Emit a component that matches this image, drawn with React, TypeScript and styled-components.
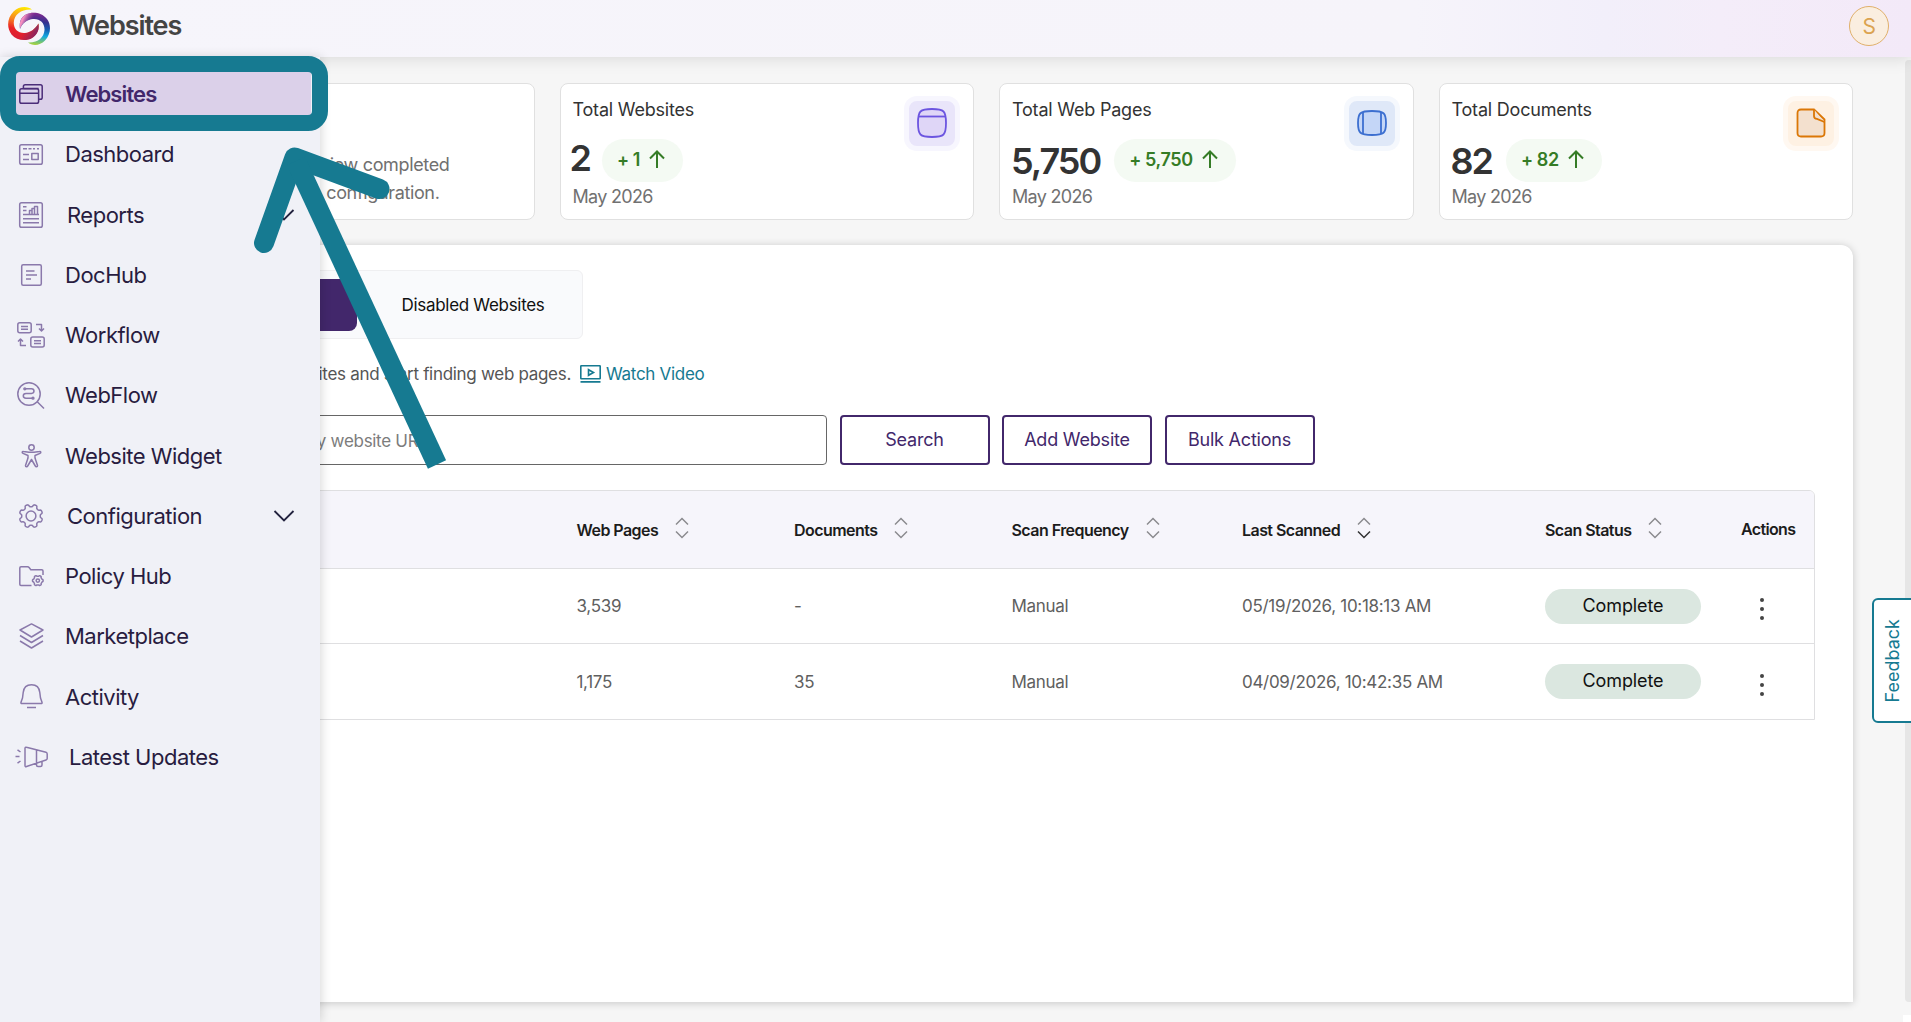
import type { ReactNode } from 'react';
import styled, { createGlobalStyle } from 'styled-components';

const PURPLE = '#42276b';
const TEAL = '#167a91';

const Logo = () => (
  <svg width="44" height="40" viewBox="7 6 44 40">
    <defs>
      <linearGradient id="warm" gradientUnits="userSpaceOnUse" x1="29" y1="6" x2="21" y2="40">
        <stop offset="0.05" stopColor="#ffec00" />
        <stop offset="0.2" stopColor="#fdc70c" />
        <stop offset="0.45" stopColor="#f7851f" />
        <stop offset="0.72" stopColor="#ea2227" />
        <stop offset="0.98" stopColor="#d81f36" />
      </linearGradient>
      <linearGradient id="wine" gradientUnits="userSpaceOnUse" x1="24" y1="30" x2="38" y2="36">
        <stop offset="0" stopColor="#8c2560" stopOpacity="0" />
        <stop offset="0.8" stopColor="#8c2560" />
      </linearGradient>
      <linearGradient id="cool" gradientUnits="userSpaceOnUse" x1="37" y1="12" x2="33" y2="45">
        <stop offset="0.05" stopColor="#7b2a90" />
        <stop offset="0.28" stopColor="#35308f" />
        <stop offset="0.5" stopColor="#1560b4" />
        <stop offset="0.7" stopColor="#12a9df" />
        <stop offset="0.98" stopColor="#a5d140" />
      </linearGradient>
      <linearGradient id="pink" gradientUnits="userSpaceOnUse" x1="20" y1="26" x2="29" y2="30">
        <stop offset="0" stopColor="#f78fc0" />
        <stop offset="1" stopColor="#8a2c92" stopOpacity="0" />
      </linearGradient>
    </defs>
    {['url(#warm)', 'url(#wine)'].map((fill) => (
      <path
        key={fill}
        fill={fill}
        d="M32 9.500C28 6 19 6 13.500 11.500C7 18 6.500 28 11.500 34.500C16.500 40.500 26 41.500 32 38C37 35 39.500 30 38.500 23.500C35 29 30.500 32.500 25 33C18 33.500 13.500 29 13.800 22.500C14.200 14.500 21 9 32 9.500Z"
      />
    ))}
    {['url(#cool)', 'url(#pink)'].map((fill) => (
      <path
        key={fill}
        fill={fill}
        d="M28 42.500C32 46 40 46 45 40.500C51 34 51.500 25 47 19C41.500 12 32 11.500 26 14.500C21 17 19 22 20 29C22.500 23 27 19.500 33 19C40 18.500 44.800 23 44.500 30C44 37.500 38 43 28 42.500Z"
      />
    ))}
  </svg>
);

const ChevronDown = () => (
  <svg width="22" height="14" viewBox="0 0 22 14" fill="none" stroke="#23233f" strokeWidth="1.8">
    <path d="M1.500 2L11 11.500L20.500 2" />
  </svg>
);

const ArrowUp = () => (
  <svg width="16" height="18" viewBox="0 0 16 18" fill="none" stroke="#357c26" strokeWidth="2">
    <path d="M8 18V1.500M1 8.500L8 1.500L15 8.500" />
  </svg>
);

const SortIcon = ({ desc }: { desc?: boolean }) => (
  <svg width="14" height="22" viewBox="0 0 14 22" fill="none" stroke="#8b8b8f" strokeWidth="1.5">
    <path d="M1 7.500L7 1.500L13 7.500" />
    <path d="M1 14.500L7 20.500L13 14.500" stroke={desc ? '#333' : undefined} />
  </svg>
);

const KebabIcon = () => (
  <svg width="6" height="24" viewBox="0 0 6 24" fill="#444">
    <circle cx="3" cy="3" r="2" />
    <circle cx="3" cy="12" r="2" />
    <circle cx="3" cy="21" r="2" />
  </svg>
);

const VideoIcon = () => (
  <svg width="21" height="18" viewBox="0 0 21 18" fill="none" stroke={TEAL} strokeWidth="1.6">
    <rect x="0.800" y="0.800" width="19.400" height="13" rx="0.500" />
    <path d="M0.500 16.900H20.500M8.500 4.700V10.300L13.500 7.500Z" />
  </svg>
);

// eight rounded lobes, with a dip at the top
const gearOutline = (cx: number, cy: number, radius: number, depth: number, lobes: number) => {
  const points = Array.from({ length: 144 }, (_, i) => {
    const angle = (i / 144) * Math.PI * 2;
    const wave = Math.tanh(-2.2 * Math.cos(lobes * angle));
    const r = radius + depth * wave;
    return `${(cx + r * Math.sin(angle)).toFixed(2)} ${(cy - r * Math.cos(angle)).toFixed(2)}`;
  });
  return `M${points.join('L')}Z`;
};

interface NavEntry {
  label: string;
  icon: ReactNode;
  w: number;
  h: number;
  active?: boolean;
  expandable?: boolean;
  inset?: number;
}

const navItems: NavEntry[] = [
  {
    label: 'Websites',
    active: true,
    w: 24,
    h: 20,
    icon: (
      <>
        <rect x="0.800" y="4.800" width="18.800" height="14.400" rx="1.800" />
        <path d="M0.800 9.200H19.600M4.400 4.500V2.600Q4.400 0.800 6.200 0.800H21.400Q23.200 0.800 23.200 2.600V13.400Q23.200 15.200 21.400 15.200H19.800M4.600 4.600H19.600" />
      </>
    ),
  },
  {
    label: 'Dashboard',
    w: 24,
    h: 21,
    icon: (
      <>
        <rect x="0.700" y="0.700" width="22.600" height="19.600" rx="1.800" />
        <path d="M4 4.800H8M9.500 4.800H12.500M14 4.800H16M18 4.800H20M4 10.600H10M4 15.600H10" />
        <rect x="12.800" y="9.600" width="6.400" height="5.800" />
      </>
    ),
  },
  {
    label: 'Reports',
    expandable: true,
    inset: 2,
    w: 24,
    h: 26,
    icon: (
      <>
        <rect x="0.700" y="0.700" width="22.600" height="24.600" rx="1.800" />
        <path d="M4 4.800H7.500M4 8.500H7.500M4 12.500H20M4 16.700H20M4 20.700H20M10.500 12V8.500H13V12M13 8.500V6.500H15.500V12M15.500 6.500V4.600H18.500V12" />
      </>
    ),
  },
  {
    label: 'DocHub',
    w: 21,
    h: 22,
    icon: (
      <>
        <rect x="0.700" y="0.700" width="19.600" height="20.600" rx="1.500" />
        <path d="M5 7H13.500M5 11H16M5 15H10" />
      </>
    ),
  },
  {
    label: 'Workflow',
    w: 28,
    h: 26,
    icon: (
      <>
        <rect x="0.800" y="0.800" width="13.400" height="10" rx="2" />
        <rect x="13.800" y="15" width="13.400" height="10" rx="2" />
        <path d="M4 4.500H11M4 7.300H11M17 18.700H24M17 21.500H24M19 2.600H24.500V8.500M22 6.500L24.500 9L27 6.500M9 23.500H3.500V17.500M1 19.500L3.500 17L6 19.500" />
      </>
    ),
  },
  {
    label: 'WebFlow',
    w: 28,
    h: 27,
    icon: (
      <>
        <circle cx="12" cy="12" r="11.200" />
        <path d="M20 19.500L27 26.500M9 6.800H14.500C17.800 6.800 17.800 11.400 14.500 11.400H9C5.400 11.400 5.400 16.200 9 16.200H15" />
        <circle cx="7.800" cy="6.800" r="0.900" />
        <circle cx="16" cy="16.200" r="0.900" />
      </>
    ),
  },
  {
    label: 'Website Widget',
    w: 21,
    h: 24,
    icon: (
      <>
        <circle cx="10.500" cy="3.500" r="2.700" />
        <path d="M1.200 8.200Q1.400 7.400 2.500 7.600L8 8.200H13L18.500 7.600Q19.600 7.400 19.800 8.200Q19.900 9 19 9.400L14 11.500Q13.700 13.500 14.500 15.500L16.500 21.500Q16.600 22.700 15.500 22.800Q14.700 22.900 14.300 22L10.500 15.500L6.700 22Q6.300 22.900 5.500 22.800Q4.400 22.700 4.500 21.500L6.500 15.500Q7.300 13.500 7 11.500L2 9.400Q1.100 9 1.200 8.200Z" />
      </>
    ),
  },
  {
    label: 'Configuration',
    expandable: true,
    inset: 2,
    w: 24,
    h: 24,
    icon: (
      <>
        <circle cx="12" cy="12" r="4.900" />
        <path d={gearOutline(12, 12, 10.5, 1.25, 8)} />
      </>
    ),
  },
  {
    label: 'Policy Hub',
    w: 25,
    h: 21,
    icon: (
      <>
        <path d="M12.500 19.500H2Q0.800 19.500 0.800 18.300V2Q0.800 0.800 2 0.800H8.500Q9.500 0.800 10.300 1.800L11.800 3.700H22.800Q24 3.700 24 4.900V9" />
        <circle cx="18.800" cy="14.600" r="1.700" />
        <path d={gearOutline(18.8, 14.6, 4.8, 0.5, 6)} />
      </>
    ),
  },
  {
    label: 'Marketplace',
    w: 25,
    h: 26,
    icon: <path d="M12.500 0.900L24 7L12.500 14L1 7ZM1 12.500L12.500 19.500L24 12.500M1 18L12.500 25L24 18" />,
  },
  {
    label: 'Activity',
    w: 23,
    h: 25,
    icon: (
      <path d="M2 19.600Q0.600 19.600 1 18.200L2.500 14L3.200 8.500Q4 0.800 11.500 0.800T19.800 8.500L20.500 14L22 18.200Q22.400 19.600 21 19.600ZM7 23.500H16" />
    ),
  },
  {
    label: 'Latest Updates',
    inset: 4,
    w: 33,
    h: 22,
    icon: (
      <path d="M10 2.300Q10 0.800 11.500 1.300L31 6.300Q32.200 6.700 32.200 8V12.500Q32.200 13.600 31 14L11.500 20.500Q10 21 10 19.600ZM21.500 4V19Q21.500 20.500 23 20.500H25.500Q27 20.500 27 19V15.300M0.500 10.500H4.500M2.500 3.800L5.500 6M2.500 17.200L5.500 15" />
    ),
  },
];

interface Stat {
  title: string;
  value: string;
  delta: string;
  tone: string;
  ring: string;
  raised?: boolean;
  icon: ReactNode;
}

const stats: Stat[] = [
  {
    title: 'Total Websites',
    value: '2',
    delta: '+ 1',
    tone: '#e9e5fa',
    ring: '#f7f6fe',
    raised: true,
    icon: (
      <g stroke="#6c55e0" fill="#dfd6f7">
        <path d="M1 15C1 3 3 1 15 1S29 3 29 15S27 29 15 29S1 27 1 15Z" />
        <path d="M2 8.500H28" />
      </g>
    ),
  },
  {
    title: 'Total Web Pages',
    value: '5,750',
    delta: '+ 5,750',
    tone: '#dfe8f8',
    ring: '#f5f8fd',
    icon: (
      <g stroke="#3c6fd0" fill="#c4d6f7">
        <path d="M1 15C1 5 3 3 15 3S29 5 29 15S27 27 15 27S1 25 1 15Z" />
        <path d="M6 4V26M24 4V26" />
      </g>
    ),
  },
  {
    title: 'Total Documents',
    value: '82',
    delta: '+ 82',
    tone: '#fef1e3',
    ring: '#fff8f1',
    icon: (
      <g stroke="#db7706" fill="#f3e0ce">
        <path d="M1.500 5Q1.500 1.500 5 1.500H18L28.500 11.500V25Q28.500 28.500 25 28.500H5Q1.500 28.500 1.500 25Z" />
        <path d="M18 1.500V8Q18 10.800 21 10.800L28.500 14" />
      </g>
    ),
  },
];

const rows = [
  { pages: '3,539', docs: '-', freq: 'Manual', scanned: '05/19/2026, 10:18:13 AM' },
  { pages: '1,175', docs: '35', freq: 'Manual', scanned: '04/09/2026, 10:42:35 AM' },
];

const App = () => {
  return (
    <Page>
      <GlobalStyle />
      <Header>
        <Logo />
        <PageTitle>Websites</PageTitle>
        <Avatar>S</Avatar>
      </Header>
      <Body>
        <Sidebar>
          {navItems.map(({ label, icon, w, h, active, expandable, inset = 0 }) => (
            <NavItem key={label} $active={active}>
              <NavIcon>
                <NavSvg $active={active} width={w} height={h} viewBox={`0 0 ${w} ${h}`}>
                  {icon}
                </NavSvg>
              </NavIcon>
              <NavLabel $active={active} $inset={inset}>
                {label}
              </NavLabel>
              {expandable && <ChevronDown />}
            </NavItem>
          ))}
        </Sidebar>
        <Main>
          <StatGrid>
            <InfoCard>
              <InfoLine>Review completed</InfoLine>
              <InfoLine $shift={10}>configuration.</InfoLine>
            </InfoCard>
            {stats.map((stat) => (
              <StatCard key={stat.title}>
                <div>
                  <StatTitle>{stat.title}</StatTitle>
                  <StatRow>
                    <StatValue $raised={stat.raised}>{stat.value}</StatValue>
                    <Delta>
                      {stat.delta}
                      <ArrowUp />
                    </Delta>
                  </StatRow>
                  <StatDate>May 2026</StatDate>
                </div>
                <StatIcon $tone={stat.tone} $ring={stat.ring}>
                  <svg width="30" height="30" viewBox="0 0 30 30" strokeWidth="1.800">
                    {stat.icon}
                  </svg>
                </StatIcon>
              </StatCard>
            ))}
          </StatGrid>
          <Panel>
            <Tabs>
              <ActiveTab />
              <Tab>Disabled Websites</Tab>
            </Tabs>
            <Description>
              <DescText>Add websites and start finding web pages.</DescText>
              <VideoIcon />
              <VideoLink>Watch Video</VideoLink>
            </Description>
            <Toolbar>
              <SearchInput placeholder="Search by website URL" />
              <Button>Search</Button>
              <Button>Add Website</Button>
              <Button>Bulk Actions</Button>
            </Toolbar>
            <Table>
              <HeadRow>
                <span />
                {['Web Pages', 'Documents', 'Scan Frequency', 'Last Scanned', 'Scan Status'].map((name) => (
                  <HeadCell key={name}>
                    {name}
                    <SortIcon desc={name === 'Last Scanned'} />
                  </HeadCell>
                ))}
                <ActionsHead>Actions</ActionsHead>
              </HeadRow>
              {rows.map((row) => (
                <Row key={row.scanned}>
                  <span />
                  <span>{row.pages}</span>
                  <span>{row.docs}</span>
                  <span>{row.freq}</span>
                  <span>{row.scanned}</span>
                  <Status>Complete</Status>
                  <Kebab>
                    <KebabIcon />
                  </Kebab>
                </Row>
              ))}
            </Table>
          </Panel>
        </Main>
        <ScrollThumb />
        <ScrollCorner />
      </Body>
      <Feedback>Feedback</Feedback>
      <Highlight />
      <Pointer viewBox="0 0 460 480">
        <path d="M264 243L294.500 157.500L379.500 189" strokeLinecap="round" strokeLinejoin="round" />
        <path d="M296 161L437 464.500" />
      </Pointer>
    </Page>
  );
};

export default App;

const GlobalStyle = createGlobalStyle`
  * {
    box-sizing: border-box;
  }
  body {
    margin: 0;
    overflow: hidden;
    font-family: Inter, 'Liberation Sans', sans-serif;
    font-size: 17px;
    letter-spacing: -0.3px;
    color: #333;
  }
`;

const Page = styled.div`
  position: relative;
  display: flex;
  flex-direction: column;
  height: 1022px;
  overflow: hidden;
`;

const Header = styled.header`
  display: flex;
  align-items: center;
  flex: none;
  height: 57px;
  padding: 0 22px 5px 7px;
  background: linear-gradient(90deg, #f6f5fb 0%, #f6f4fa 74%, #f2effa 84%, #f4edf9 90%, #f3e9f8 100%);
  box-shadow: 0 1px 16px rgba(0, 0, 0, 0.13);
  z-index: 1;
`;

const PageTitle = styled.h1`
  margin: -1px auto 0 18px;
  font-size: 27px;
  font-weight: 600;
  letter-spacing: -1.1px;
  color: #444;
`;

const Avatar = styled.div`
  display: flex;
  align-items: center;
  justify-content: center;
  width: 40px;
  height: 40px;
  border: 1px solid #e0b06a;
  border-radius: 50%;
  background: #faeee0;
  color: #dba351;
  font-size: 21px;
`;

const Body = styled.div`
  position: relative;
  flex: 1;
  background: #f6f6f6;
`;

const Sidebar = styled.nav`
  position: absolute;
  top: 0;
  left: 0;
  z-index: 2;
  width: 320px;
  height: 100%;
  padding-top: 7px;
  background: #f0f1f7;
  box-shadow: 1px 0 10px rgba(0, 0, 0, 0.16);
`;

const NavItem = styled.div<{ $active?: boolean }>`
  display: flex;
  align-items: center;
  height: 60.250px;
  padding-right: 25px;
  ${({ $active }) => $active && 'background: linear-gradient(#dbd0e9, #dbd0e9) 12px 5px / 299px 50px no-repeat;'}
`;

const NavIcon = styled.span`
  display: flex;
  justify-content: center;
  width: 62px;
  flex: none;
`;

const NavSvg = styled.svg<{ $active?: boolean }>`
  flex: none;
  overflow: visible;
  fill: none;
  stroke: ${({ $active }) => ($active ? '#4b2d79' : '#8a79ab')};
  stroke-width: 1.5;
  stroke-linejoin: round;
`;

const NavLabel = styled.span<{ $active?: boolean; $inset: number }>`
  flex: 1;
  padding-left: ${({ $inset }) => $inset + 3}px;
  font-size: 22px;
  font-weight: ${({ $active }) => ($active ? 600 : 400)};
  letter-spacing: ${({ $active }) => ($active ? '-0.900px' : '-0.500px')};
  color: ${({ $active }) => ($active ? PURPLE : '#281c40')};
`;

const Main = styled.main`
  padding: 26px 58px 0 120px;
`;

const StatGrid = styled.section`
  display: grid;
  grid-template-columns: repeat(4, 1fr);
  gap: 25px;
`;

const Card = styled.div`
  height: 137px;
  border: 1px solid #e0e0e0;
  border-radius: 8px;
  background: #fff;
`;

const InfoCard = styled(Card)`
  display: flex;
  flex-direction: column;
  align-items: flex-end;
  padding: 67px 84px 0 0;
`;

const InfoLine = styled.span<{ $shift?: number }>`
  margin-right: ${({ $shift = 0 }) => $shift}px;
  font-size: 18px;
  line-height: 28px;
  letter-spacing: -0.350px;
  color: #707070;
`;

const StatCard = styled(Card)`
  display: flex;
  justify-content: space-between;
  padding: 12px 13px 0 12px;
`;

const StatTitle = styled.div`
  margin-top: 2px;
  font-size: 18px;
  line-height: 23px;
  letter-spacing: -0.200px;
`;

const StatRow = styled.div`
  display: flex;
  align-items: center;
  gap: 16px;
  height: 43px;
  margin-top: 18px;
`;

const StatValue = styled.span<{ $raised?: boolean }>`
  margin: ${({ $raised }) => ($raised ? '-6px -4px 0 -3px' : '0 -2px 0 -1px')};
  font-size: 36px;
  font-weight: 600;
  letter-spacing: -2px;
`;

const Delta = styled.span`
  display: flex;
  align-items: center;
  gap: 9px;
  height: 43px;
  padding: 0 18px 3px 15px;
  border-radius: 22px;
  background: #f4faf3;
  color: #357c26;
  font-size: 18px;
  font-weight: 600;
  letter-spacing: -0.400px;
`;

const StatDate = styled.div`
  margin-top: 4px;
  font-size: 18px;
  line-height: 22px;
  letter-spacing: -0.700px;
  color: #717171;
`;

const StatIcon = styled.div<{ $tone: string; $ring: string }>`
  display: flex;
  align-items: center;
  justify-content: center;
  width: 56px;
  height: 55px;
  border: 5px solid ${({ $ring }) => $ring};
  border-radius: 13px;
  background: ${({ $tone }) => $tone};

  svg {
    margin-top: -1px;
  }
`;

const Panel = styled.section`
  height: 757px;
  margin-top: 25px;
  padding: 25px 38px 0;
  border-radius: 12px 12px 0 0;
  background: #fff;
  box-shadow: 0 1px 8px rgba(0, 0, 0, 0.2);
`;

const Tabs = styled.div`
  display: flex;
  align-items: center;
  width: 425px;
  height: 69px;
  padding: 0 7px;
  border: 1px solid #efeff1;
  border-radius: 6px;
  background: #f9fafc;
`;

const ActiveTab = styled.div`
  width: 191px;
  height: 52px;
  border-radius: 8px;
  background: ${PURPLE};
`;

const Tab = styled.div`
  flex: 1;
  padding-left: 44.500px;
  color: #111;
`;

const Description = styled.div`
  display: flex;
  align-items: center;
  height: 22px;
  margin-top: 24px;
`;

const DescText = styled.span`
  width: 413px;
  margin-right: 9px;
  text-align: right;
  white-space: nowrap;
  color: #555;
`;

const VideoLink = styled.a`
  margin-left: 5px;
  color: ${TEAL};
`;

const Toolbar = styled.div`
  display: flex;
  gap: 12.500px;
  margin-top: 30px;
`;

const SearchInput = styled.input`
  width: 669px;
  height: 50px;
  padding: 2px 0 0 89px;
  border: 1px solid #666;
  border-radius: 4px;
  font: inherit;
  letter-spacing: inherit;

  &::placeholder {
    color: #7c7c7c;
  }
`;

const Button = styled.button`
  width: 150px;
  height: 50px;
  padding: 0 0 2px;
  border: 2px solid ${PURPLE};
  border-radius: 4px;
  background: #fff;
  color: ${PURPLE};
  font: inherit;
  font-size: 18px;
  letter-spacing: -0.200px;
`;

const Table = styled.div`
  margin-top: 25px;
  border: 1px solid #dfdfe1;
  border-radius: 6px 6px 0 0;
  overflow: hidden;
`;

const Row = styled.div`
  display: grid;
  grid-template-columns: 417.500px 217.500px 217.500px 230.500px 303px 196px 1fr;
  align-items: center;
  height: 75px;
  border-bottom: 1px solid #dfdfe1;
  color: #606060;

  &:last-child {
    border-bottom: none;
  }
`;

const HeadRow = styled(Row)`
  height: 78px;
  background: #f6f5fb;
  color: #1c1c1c;
`;

const HeadCell = styled.div`
  display: flex;
  align-items: center;
  gap: 17px;
  font-size: 16px;
  font-weight: 600;
  letter-spacing: -0.550px;

  svg {
    margin-top: -3px;
  }
`;

const ActionsHead = styled(HeadCell)`
  margin-top: -2px;
  letter-spacing: -0.650px;
`;

const Status = styled.span`
  width: 156px;
  height: 35px;
  border-radius: 18px;
  background: #dbe7e0;
  color: #111;
  font-size: 18px;
  line-height: 33px;
  text-align: center;
  letter-spacing: -0.100px;
`;

const Kebab = styled.span`
  display: flex;
  padding: 6px 0 0 18px;
`;

const ScrollThumb = styled.div`
  position: absolute;
  top: 3px;
  right: 0;
  width: 6px;
  height: 942px;
  border-radius: 4px 0 0 4px;
  background: #e6e6e6;
`;

const ScrollCorner = styled.div`
  position: absolute;
  right: 0;
  bottom: 0;
  width: 8px;
  height: 7px;
  background: #fff;
`;

const Feedback = styled.div`
  position: absolute;
  top: 598px;
  right: -2px;
  z-index: 3;
  display: flex;
  align-items: center;
  justify-content: center;
  width: 41px;
  height: 125px;
  border: 2px solid ${TEAL};
  border-radius: 6px 0 0 6px;
  background: #fff;
  color: ${TEAL};
  font-size: 18px;
  letter-spacing: 0;
  writing-mode: sideways-lr;
`;

const Highlight = styled.div`
  position: absolute;
  top: 56px;
  left: 0;
  z-index: 4;
  width: 328px;
  height: 75px;
  border: 16px solid ${TEAL};
  border-radius: 20px;
`;

const Pointer = styled.svg`
  position: absolute;
  top: 0;
  left: 0;
  z-index: 4;
  width: 460px;
  height: 480px;
  fill: none;
  stroke: ${TEAL};
  stroke-width: 20;
`;
